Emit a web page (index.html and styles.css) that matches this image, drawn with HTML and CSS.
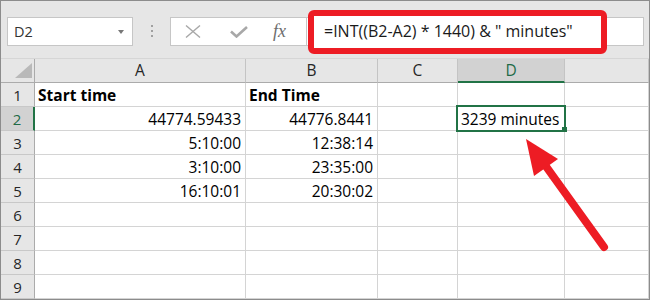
FILE: index.html
```html
<!DOCTYPE html>
<html lang="en">
<head>
    <meta charset="UTF-8">
    <title>Minutes between times</title>
    <link rel="stylesheet" href="styles.css">
</head>
<body>

    <div class="sheet">
        <div class="toolbar">
            <div class="namebox">
                <span>D2</span>
                <span class="caret"></span>
            </div>
            <div class="grip"><i></i><i></i><i></i></div>
            <div class="fbar">
                <div class="fbar-btns">
                    <svg class="ico-cancel" width="16" height="13" viewBox="0 0 16 13">
                        <path d="M1 0.5L15 12.5M15 0.5L1 12.5" stroke="#a8a8a8" stroke-width="1.4" fill="none"/>
                    </svg>
                    <svg class="ico-enter" width="18" height="12" viewBox="0 0 18 12">
                        <path d="M1 5.5L6.5 10.5L17 1" stroke="#a8a8a8" stroke-width="2.6" fill="none"/>
                    </svg>
                    <span class="fx">fx</span>
                </div>
                <div class="fbar-input"></div>
            </div>
        </div>

        <div class="grid">
            <!-- column headers -->
            <div class="corner"><span></span></div>
            <div class="colhead">A</div>
            <div class="colhead">B</div>
            <div class="colhead">C</div>
            <div class="colhead active">D</div>
            <div class="colhead"></div>

            <div class="rowhead">1</div>
            <div class="cell bold">Start time</div>
            <div class="cell bold">End Time</div>
            <div class="cell"></div>
            <div class="cell"></div>
            <div class="cell"></div>

            <div class="rowhead active">2</div>
            <div class="cell num">44774.59433</div>
            <div class="cell num">44776.8441</div>
            <div class="cell"></div>
            <div class="cell sel">3239 minutes<span class="handle"></span></div>
            <div class="cell"></div>

            <div class="rowhead">3</div>
            <div class="cell num">5:10:00</div>
            <div class="cell num">12:38:14</div>
            <div class="cell"></div>
            <div class="cell"></div>
            <div class="cell"></div>

            <div class="rowhead">4</div>
            <div class="cell num">3:10:00</div>
            <div class="cell num">23:35:00</div>
            <div class="cell"></div>
            <div class="cell"></div>
            <div class="cell"></div>

            <div class="rowhead">5</div>
            <div class="cell num">16:10:01</div>
            <div class="cell num">20:30:02</div>
            <div class="cell"></div>
            <div class="cell"></div>
            <div class="cell"></div>

            <div class="rowhead">6</div>
            <div class="cell"></div>
            <div class="cell"></div>
            <div class="cell"></div>
            <div class="cell"></div>
            <div class="cell"></div>

            <div class="rowhead">7</div>
            <div class="cell"></div>
            <div class="cell"></div>
            <div class="cell"></div>
            <div class="cell"></div>
            <div class="cell"></div>

            <div class="rowhead">8</div>
            <div class="cell"></div>
            <div class="cell"></div>
            <div class="cell"></div>
            <div class="cell"></div>
            <div class="cell"></div>

            <div class="rowhead">9</div>
            <div class="cell"></div>
            <div class="cell"></div>
            <div class="cell"></div>
            <div class="cell"></div>
            <div class="cell"></div>
        </div>

        <!-- highlighted formula -->
        <div class="formula">=INT((B2-A2) * 1440) &amp; " minutes"</div>

        <!-- pointer arrow -->
        <svg class="arrow" width="650" height="301" viewBox="0 0 650 301">
            <line x1="545" y1="165" x2="604" y2="247" stroke="#ed1c24" stroke-width="8" stroke-linecap="round"/>
            <polygon points="526,139 534,176 558,159" fill="#ed1c24"/>
        </svg>
    </div>

</body>
</html>
```

FILE: styles.css
```css
body {
    margin: 0;
    padding: 0;
    background-color: white;
    font-family: 'Open Sans', 'Noto Sans', sans-serif;
}

.sheet {
    position: relative;
    width: 650px;
    height: 300px;
    box-sizing: border-box;
    border: 1px solid #8c8c8c;
    background-color: white;
    overflow: hidden;
}

/* formula bar area */
.toolbar {
    display: flex;
    align-items: flex-start;
    height: 58px;
    box-sizing: border-box;
    padding-top: 16px;
    background-color: #e6e6e6;
    border-bottom: 1px solid #d6d6d6;
}

.namebox {
    display: flex;
    align-items: center;
    justify-content: space-between;
    width: 126px;
    height: 29px;
    margin-left: 6px;
    padding: 0 8px 0 6px;
    box-sizing: border-box;
    background-color: white;
    border: 1px solid #c6c6c6;
    font-size: 14.5px;
    color: #333;
}

.caret {
    width: 0;
    height: 0;
    border-left: 3px solid transparent;
    border-right: 3px solid transparent;
    border-top: 4px solid #777;
}

.grip {
    display: flex;
    flex-direction: column;
    gap: 3px;
    margin: 8px 0 0 18px;
}

.grip i {
    display: block;
    width: 2px;
    height: 2px;
    background-color: #a0a0a0;
}

.fbar {
    display: flex;
    width: 474px;
    height: 29px;
    margin-left: 17px;
    box-sizing: border-box;
    background-color: white;
    border: 1px solid #c6c6c6;
}

.fbar-btns {
    display: flex;
    align-items: center;
    width: 136px;
    box-sizing: border-box;
    border-right: 1px solid #c6c6c6;
}

.ico-cancel {
    margin-left: 14px;
}

.ico-enter {
    margin-left: 29px;
}

.fx {
    margin-left: 25px;
    font-family: 'Liberation Serif', serif;
    font-style: italic;
    font-size: 18px;
    color: #6d6d6d;
}

.fbar-input {
    flex: 1;
}

/* worksheet */
.grid {
    display: grid;
    grid-template-columns: 34px 211px 132px 80px 107px 1fr;
    grid-auto-rows: 24px;
}

.corner,
.colhead,
.rowhead,
.cell {
    box-sizing: border-box;
    border-right: 1px solid #d4d4d4;
    border-bottom: 1px solid #d4d4d4;
}

.corner {
    display: flex;
    justify-content: flex-end;
    align-items: flex-end;
    padding: 0 2px 4px 0;
    background-color: #e6e6e6;
    border-right-color: #ababab;
    border-bottom-color: #ababab;
}

.corner span {
    width: 17px;
    height: 15px;
    background-color: #b9b9b9;
    clip-path: polygon(100% 0, 100% 100%, 0 100%);
}

.colhead {
    padding-top: 1px;
    background-color: #e6e6e6;
    border-right-color: #c4c4c4;
    border-bottom-color: #ababab;
    text-align: center;
    font-size: 15.5px;
    line-height: 20px;
    color: #262626;
}

.colhead.active {
    background-color: #d2d2d2;
    border-bottom: 2px solid #217346;
    color: #1e6b47;
}

.rowhead {
    padding-top: 2px;
    background-color: #e6e6e6;
    border-right-color: #ababab;
    border-bottom-color: #c8c8c8;
    text-align: center;
    font-size: 15px;
    line-height: 20px;
    color: #262626;
}

.rowhead.active {
    background-color: #d2d2d2;
    border-right: 2px solid #217346;
    color: #1e6b47;
}

.cell {
    padding: 2px 3px 0;
    font-size: 15.5px;
    line-height: 20px;
    color: #000;
    white-space: nowrap;
}

.cell.bold {
    font-weight: bold;
}

.cell.num {
    text-align: right;
    padding-right: 4px;
}

.cell.sel {
    position: relative;
}

.cell.sel::after {
    content: "";
    position: absolute;
    top: -2px;
    left: -2px;
    right: -2px;
    bottom: -2px;
    border: 2px solid #217346;
}

.handle {
    position: absolute;
    right: -3px;
    bottom: -2px;
    width: 5px;
    height: 5px;
    background-color: #217346;
    z-index: 1;
}

/* annotations */
.formula {
    position: absolute;
    left: 307px;
    top: 9px;
    width: 299px;
    height: 44px;
    box-sizing: border-box;
    padding-left: 10px;
    background-color: white;
    border: 6px solid #ed1c24;
    border-radius: 6px;
    font-size: 16px;
    line-height: 30px;
    color: #1a1a1a;
    white-space: nowrap;
}

.arrow {
    position: absolute;
    left: -1px;
    top: -1px;
}
```
